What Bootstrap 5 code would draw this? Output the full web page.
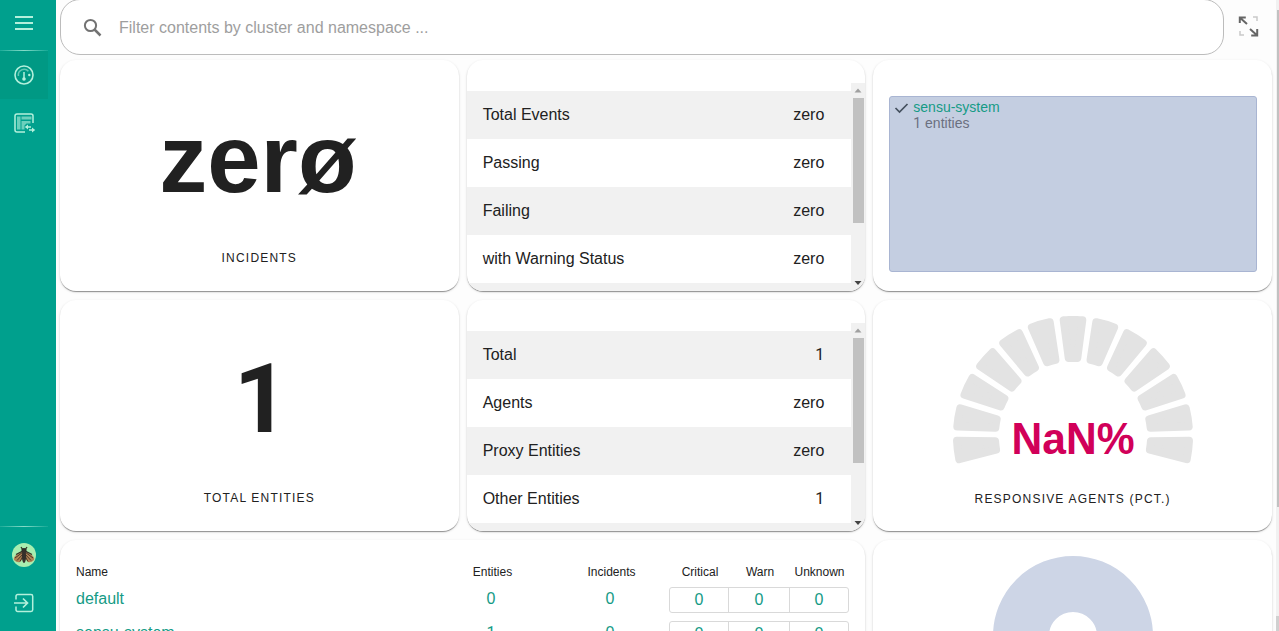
<!DOCTYPE html>
<html lang="en">
<head>
<meta charset="utf-8">
<meta name="viewport" content="width=device-width, initial-scale=1">
<title>Dashboard</title>
<link href="https://cdn.jsdelivr.net/npm/bootstrap@5.3.0/dist/css/bootstrap.min.css" rel="stylesheet">
<style>
body{font-family:"Liberation Sans",Arial,sans-serif;font-size:16px;line-height:24px;color:#212121;background:#fdfdfd}
svg{display:block}
a{color:#159b86;text-decoration:none}
.side{width:56px;background:#00a08d;color:#b4f0dc}
.side a{width:48px;height:48px;color:inherit;display:flex;align-items:center;justify-content:center}
.side a.current{background:#009984}
.side .menu-link{height:46px}
.rule{width:48px;height:1px;background:linear-gradient(90deg,rgba(180,240,220,.15),rgba(180,240,220,.75) 50%,rgba(180,240,220,.1))}
.topbar{height:60px}
.search{width:1164px;height:56px;margin:-1px 0 0 4px;border:1px solid #bcbcbc;border-radius:20px;background:#fff;padding:1px 22px 0}
.search input{color:#212121;font-size:16px;background:none}
.search input::placeholder{color:#9e9e9e;opacity:1}
.expand{margin:15px 0 0 11px;overflow:visible}
.tile{height:231px;margin-bottom:1px;border:0;border-radius:16px;background:#fff;overflow:hidden;box-shadow:0 2px 1px -1px rgba(0,0,0,.2),0 1px 1px rgba(0,0,0,.22),0 1px 3px rgba(0,0,0,.12)}
.figure-big{font-size:96px;line-height:110px;height:110px;font-weight:700;margin:44px 3px 0 0}
.one{font-family:Roboto,"Liberation Sans",sans-serif}
.figure-big.one{margin:44px 0 0 4px}
.caption-sm{font-size:12px;line-height:20px;letter-spacing:1.2px;text-transform:uppercase;margin-bottom:23px}
.gauge-caption{margin-bottom:22px}
.pane{margin-top:23px;height:208px}
.lines{padding-top:8px}
.lines li{height:48px;flex:none;padding:0 27px 0 16px}
.lines li:nth-child(odd){background:#f1f1f1}
.track{width:14px;background:#f1f1f1}
.thumb{width:11px;height:125px;background:#c1c1c1}
.map-box{margin:36px 15px 0 16px;height:176px;background:#c4cee1;border:1px solid #a9b5d2;border-radius:3px;font-size:14px;line-height:16px;padding:2px 4px}
.map-box svg{margin:1px 3px 0 0}
.map-box small{font-size:14px;color:#6b7080}
.ns-grid{display:grid;grid-template-columns:355px 120px 118px 180px;padding:22px 16px 0;row-gap:8px}
.ns-head{font-size:12px;line-height:20px;height:17px}
.ns-head.text-center{padding-left:3px}
.counts{display:grid;grid-template-columns:62px 58px 61px;text-align:center}
.counts.boxed{border:1px solid #d9d9d9;border-radius:3px;height:26px;grid-template-columns:58px 61px 59px}
.boxed a+a{border-left:1px solid #d9d9d9}
.page-track{width:3px;background:#f1f1f1;padding:10px 0 0 1px}
.page-thumb{height:497px;background:#c1c1c1}
.page-end{height:15px;background:#d0d0d0;margin-left:-1px}
</style>
</head>
<body>
<div class="d-flex vh-100 overflow-hidden">
  <nav class="side d-flex flex-column flex-shrink-0">
    <a href="#" class="menu-link" aria-label="Menu"><svg width="24" height="24" fill="currentColor"><path d="M3 5h18v2H3zM3 11h18v2H3zM3 17h18v2H3z"/></svg></a>
    <div class="rule mt-1"></div>
    <a href="#" class="current" aria-label="Dashboard"><svg width="24" height="24" fill="none" stroke="currentColor"><circle cx="12" cy="12" r="9" stroke-width="1.600"/><path d="M6.400 13A5.800 5.800 0 0 1 16.400 8.200" stroke-width="1.600" opacity=".55"/><path d="M12 9v6" stroke-width="1.500"/><circle cx="12" cy="16" r="1.800" fill="currentColor" stroke="none"/><circle cx="17.300" cy="12" r="1.200" fill="currentColor" stroke="none"/></svg></a>
    <a href="#" aria-label="Namespaces"><svg width="24" height="24" fill="none" stroke="currentColor"><path d="M21 12V5a2 2 0 0 0-2-2H5a2 2 0 0 0-2 2v14a2 2 0 0 0 2 2H13" stroke-width="1.500"/><path d="M5 5.500h3.500v13H5zM9.500 5.500h10v3h-10zM9.500 10h9v2.500h-4l-2 2v4h-3z" fill="currentColor" stroke="none" opacity=".6"/><path d="M14 16h5M17 19h4" stroke-width="1.500"/><path d="M16 13.500v5L12.800 16zM20 16.500v5l3.200-2.500z" fill="currentColor" stroke="none"/></svg></a>
    <div class="rule mt-auto"></div>
    <a href="#" class="mt-1" aria-label="Profile"><svg width="24" height="24"><circle cx="12" cy="12" r="12" fill="#a8eeb0"/><path d="M11 8L4 12Q1 15 2 17q3 3 6 2l3-3.500zM13 8l7 4q3 3 2 5-3 3-6 2l-3-3.500z" fill="#b08455"/><path d="M11 9l-8 6M11 11l-6 6.500M11 13l-3 5.500M13 9l8 6M13 11l6 6.500M13 13l3 5.500" stroke="#4a3628" stroke-width="1"/><path d="M4 11.500L11 8h2l7 3.500M9 4l2 3M15 4l-2 3" fill="none" stroke="#333126" stroke-width="1.300"/><ellipse cx="12" cy="7" rx="2.700" ry="2" fill="#2b2b26"/><ellipse cx="12" cy="13" rx="2.100" ry="7" fill="#35302b"/></svg></a>
    <a href="#" aria-label="Sign out"><svg width="24" height="24" fill="none" stroke="currentColor"><path d="M4 8.500V5.200A1.700 1.700 0 0 1 5.700 3.500H19A1.700 1.700 0 0 1 20.700 5.200v13.600A1.700 1.700 0 0 1 19 20.500H5.700A1.700 1.700 0 0 1 4 18.800v-3.300" stroke-width="1.500"/><path d="M2 12h13M11 7.500l4.500 4.500-4.500 4.500" stroke-width="1.700"/></svg></a>
    <div class="pb-1"></div>
  </nav>
  <main class="flex-grow-1 overflow-hidden">
    <header class="topbar d-flex align-items-start">
      <div class="search d-flex align-items-center">
        <svg width="20" height="20" class="flex-shrink-0" fill="none" stroke="#737373"><circle cx="7.500" cy="7.500" r="5.600" stroke-width="2"/><path d="M11.500 11.500l6 6" stroke-width="2.500"/></svg>
        <input class="form-control border-0 p-0 ms-3 shadow-none" placeholder="Filter contents by cluster and namespace ...">
      </div>
      <svg width="24" height="24" class="expand" fill="none" viewBox="-4 1 24 24"><g stroke="#666" stroke-width="2"><path d="M.8 9V3.500h6M1 3.700l7 6.300M18.200 15v6.500h-6M18 21.300l-7-6.300"/></g><path d="M14 3h4v4M1 17v4h4" stroke="#c9c9c9" stroke-width="1.500"/></svg>
    </header>
    <div class="row g-2 mx-0 pt-2">
      <div class="col-4 mt-0"><section class="tile card align-items-center">
        <div class="figure-big">zerø</div>
        <div class="caption-sm mt-auto">Incidents</div>
      </section></div>
      <div class="col-4 mt-0"><section class="tile card">
        <div class="pane d-flex">
          <ul class="lines list-unstyled mb-0 flex-grow-1 overflow-hidden">
            <li class="d-flex align-items-center justify-content-between"><span>Total Events</span><span>zero</span></li>
            <li class="d-flex align-items-center justify-content-between"><span>Passing</span><span>zero</span></li>
            <li class="d-flex align-items-center justify-content-between"><span>Failing</span><span>zero</span></li>
            <li class="d-flex align-items-center justify-content-between"><span>with Warning Status</span><span>zero</span></li>
            <li></li>
          </ul>
          <div class="track d-flex flex-column align-items-center">
            <svg width="14" height="15"><path d="M3.500 9.500l3.500-4 3.500 4z" fill="#a0a0a0"/></svg>
            <div class="thumb"></div>
            <svg width="14" height="15" class="mt-auto"><path d="M3.500 5l3.500 4 3.500-4z" fill="#444"/></svg>
          </div>
        </div>
      </section></div>
      <div class="col-4 mt-0"><section class="tile card">
        <div class="map-box d-flex align-items-start">
          <svg width="16" height="16" fill="none" stroke="#44505e" stroke-width="1.700"><path d="M1.500 8l4 4 8-8"/></svg>
          <div><a href="#" class="d-block">sensu-system</a><small><span class="one">1</span> entities</small></div>
        </div>
      </section></div>
      <div class="col-4"><section class="tile card align-items-center">
        <div class="figure-big one">1</div>
        <div class="caption-sm mt-auto">Total Entities</div>
      </section></div>
      <div class="col-4"><section class="tile card">
        <div class="pane d-flex">
          <ul class="lines list-unstyled mb-0 flex-grow-1 overflow-hidden">
            <li class="d-flex align-items-center justify-content-between"><span>Total</span><span class="one">1</span></li>
            <li class="d-flex align-items-center justify-content-between"><span>Agents</span><span>zero</span></li>
            <li class="d-flex align-items-center justify-content-between"><span>Proxy Entities</span><span>zero</span></li>
            <li class="d-flex align-items-center justify-content-between"><span>Other Entities</span><span class="one">1</span></li>
            <li></li>
          </ul>
          <div class="track d-flex flex-column align-items-center">
            <svg width="14" height="15"><path d="M3.500 9.500l3.500-4 3.500 4z" fill="#a0a0a0"/></svg>
            <div class="thumb"></div>
            <svg width="14" height="15" class="mt-auto"><path d="M3.500 5l3.500 4 3.500-4z" fill="#444"/></svg>
          </div>
        </div>
      </section></div>
      <div class="col-4"><section class="tile card align-items-center">
        <svg width="260" height="160" viewBox="-130 -120 260 160" class="mt-3">
          <defs><path id="wedge" d="M-9.300-115.700A116 116 0 0 1 9.300-115.700L4.300-78A78 78 0 0 0-4.300-78Z"/></defs>
          <g fill="#e3e3e3" stroke="#e3e3e3" stroke-width="8" stroke-linejoin="round">
            <use href="#wedge" transform="rotate(-96.920)"/><use href="#wedge" transform="rotate(-80.770)"/><use href="#wedge" transform="rotate(-64.620)"/><use href="#wedge" transform="rotate(-48.460)"/><use href="#wedge" transform="rotate(-32.310)"/><use href="#wedge" transform="rotate(-16.150)"/><use href="#wedge"/><use href="#wedge" transform="rotate(16.150)"/><use href="#wedge" transform="rotate(32.310)"/><use href="#wedge" transform="rotate(48.460)"/><use href="#wedge" transform="rotate(64.620)"/><use href="#wedge" transform="rotate(80.770)"/><use href="#wedge" transform="rotate(96.920)"/>
          </g>
          <text x="0" y="18" text-anchor="middle" font-size="44" font-weight="700" fill="#d10059" textLength="123" lengthAdjust="spacingAndGlyphs">NaN%</text>
        </svg>
        <div class="caption-sm gauge-caption mt-auto">Responsive Agents (pct.)</div>
      </section></div>
      <div class="col-8"><section class="tile card">
        <div class="ns-grid">
          <div class="ns-head">Name</div><div class="ns-head text-center">Entities</div><div class="ns-head text-center">Incidents</div>
          <div class="ns-head counts"><span>Critical</span><span>Warn</span><span>Unknown</span></div>
          <a href="#">default</a><a href="#" class="text-center">0</a><a href="#" class="text-center">0</a>
          <div class="counts boxed"><a href="#">0</a><a href="#">0</a><a href="#">0</a></div>
          <a href="#">sensu-system</a><a href="#" class="text-center one">1</a><a href="#" class="text-center">0</a>
          <div class="counts boxed"><a href="#">0</a><a href="#">0</a><a href="#">0</a></div>
        </div>
      </section></div>
      <div class="col-4"><section class="tile card align-items-center">
        <svg width="160" height="160" class="mt-3"><circle cx="80" cy="80" r="52" fill="none" stroke="#cdd5e6" stroke-width="56"/></svg>
      </section></div>
    </div>
  </main>
  <div class="page-track d-flex flex-column justify-content-between flex-shrink-0"><div class="page-thumb"></div><div class="page-end"></div></div>
</div>
<script src="https://cdn.jsdelivr.net/npm/bootstrap@5.3.0/dist/js/bootstrap.bundle.min.js"></script>
</body>
</html>
